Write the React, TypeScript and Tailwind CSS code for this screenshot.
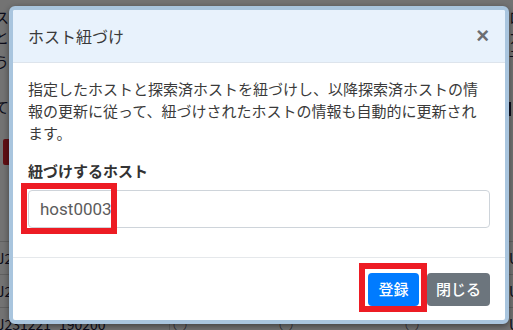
import React from "react";

const jp = "font-['Noto_Sans_CJK_JP','Noto_Sans',sans-serif]";

const rows = ["J231221_190100", "J231221_190150", "J231221_190200"];

// page that sits behind the dimmed overlay, only its edges show
const BackgroundPage = () => (
  <div className="flex h-full flex-col text-[15px] leading-[20px] text-[#1c1c3c]">
    <div className="flex h-[241px] shrink-0 justify-between">
      <div className="flex flex-col pt-[7px]">
        <div className="flex h-[20px] w-[9px] justify-end whitespace-nowrap">テス</div>
        <div className="flex h-[20px] w-[9px] justify-end whitespace-nowrap">合せと</div>
        <div className="mt-[5px] flex h-[20px] w-[9px] justify-end whitespace-nowrap">含う</div>
        <div className="mt-[25px] flex h-[20px] w-[9px] justify-end whitespace-nowrap">いて</div>
        <div className="ml-[3px] mt-[22px] h-[26px] w-[6px] rounded-l-[2px] bg-[#d8232e]" />
      </div>
      <div className="flex w-[4px] flex-col pt-[7px]">
        <div className="h-[20px] whitespace-nowrap">ロー</div>
        <div className="h-[20px] whitespace-nowrap">カー</div>
        <div className="h-[20px] whitespace-nowrap">予定</div>
        <div className="mt-[35px] h-[14px] w-[2px] bg-[#1c1c3c]" />
      </div>
    </div>
    {rows.map((id, i) => (
      <div key={id} className="flex h-[33px] shrink-0 items-center border-t border-[#d4d4d4] text-[14px]">
        <div className="-ml-[3px] w-[173px] shrink-0 self-stretch border-r border-[#d4d4d4] leading-[33px]">{id}</div>
        <div className="w-[106px] shrink-0 pl-[3px]">{i === rows.length - 1 ? "○" : ""}</div>
        <div className="w-[127px] shrink-0 pl-[3px]">{i === rows.length - 1 ? "○" : ""}</div>
        <div className="w-[106px] shrink-0 pl-[2px]">{i === rows.length - 1 ? "○" : ""}</div>
        <div className="whitespace-nowrap">U2</div>
      </div>
    ))}
  </div>
);

export default function App() {
  return (
    <div className={`relative h-[330px] w-[513px] overflow-hidden bg-white ${jp}`}>
      <BackgroundPage />
      <div className="absolute inset-0 bg-black/55" />

      {/* dialog */}
      <div className="absolute left-[9px] top-[6px] flex h-[318px] w-[500px] flex-col overflow-hidden rounded-[6px] border-4 border-[#a9c5de] bg-white shadow-[0_2px_6px_rgba(0,0,0,0.45)]">
        <div className="flex h-[53px] shrink-0 items-center justify-between border-b border-[#dde4ec] bg-[#e8f2fc] pl-[15px] pr-[16px]">
          <h5 className="text-[16px] leading-[22px] text-[#3a3a3a]">ホスト紐づけ</h5>
          <button className="pb-[1px] font-['Liberation_Sans',sans-serif] text-[22px] font-bold leading-none text-[#6b6e72]">
            ×
          </button>
        </div>

        <div className="flex-1 px-[15px] pt-[15px]">
          <p className="text-[15px] leading-[22px] text-[#3a3a3a]">
            指定したホストと探索済ホストを紐づけし、以降探索済ホストの情
            <br />
            報の更新に従って、紐づけされたホストの情報も自動的に更新され
            <br />
            ます。
          </p>
          <label className="mt-[16px] block text-[15px] font-bold leading-[22px] text-[#333]">
            紐づけするホスト
          </label>
          <input
            readOnly
            defaultValue="host0003"
            className="mt-[8px] block h-[38px] w-full rounded-[4px] border border-[#ced4da] px-[11px] font-['Roboto',sans-serif] text-[17px] text-[#5c5c5c] outline-none"
          />
        </div>

        <div className="flex h-[63px] shrink-0 items-center justify-end gap-[8px] border-t border-[#e5e8eb] pr-[15px]">
          <button className="h-[33px] w-[51px] rounded-[4px] bg-[#007bff] text-[15px] font-medium text-white">登録</button>
          <button className="h-[33px] w-[63px] rounded-[4px] bg-[#6c757d] text-[15px] font-medium text-white">閉じる</button>
        </div>
      </div>

      {/* red annotation boxes */}
      <div className="absolute left-[21px] top-[183px] h-[51px] w-[96px] border-[6px] border-[#ed1c24]" />
      <div className="absolute left-[359px] top-[263px] h-[49px] w-[68px] border-[6px] border-[#ed1c24]" />
    </div>
  );
}
